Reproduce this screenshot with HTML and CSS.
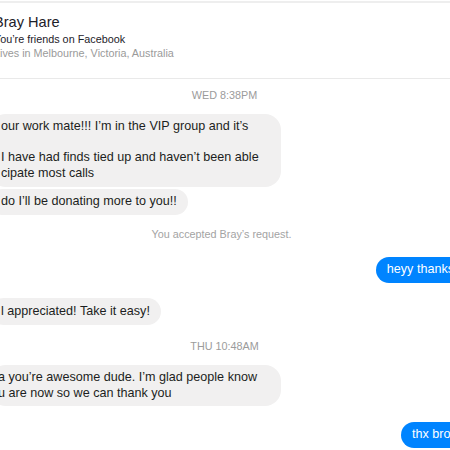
FILE: index.html
```html
<!DOCTYPE html>
<html lang="en">
<head>
<meta charset="utf-8">
<title>Bray Hare</title>
<link rel="stylesheet" href="styles.css">
</head>
<body>
<div class="window">
  <header class="profile">
    <div class="name">Bray Hare</div>
    <div class="friends">You’re friends on Facebook</div>
    <div class="lives">Lives in Melbourne, Victoria, Australia</div>
  </header>
  <main class="thread">
    <div class="stamp">WED 8:38PM</div>
    <div class="group in">
      <div class="bubble wrap">our work mate!!! I’m in the VIP group and it’s<br>&nbsp;<br>I have had finds tied up and haven’t been able<br>cipate most calls</div>
      <div class="bubble">do I’ll be donating more to you!!</div>
    </div>
    <div class="notice">You accepted Bray’s request.</div>
    <div class="group out">
      <div class="bubble">heyy thanks</div>
    </div>
    <div class="group in">
      <div class="bubble">l appreciated! Take it easy!</div>
    </div>
    <div class="stamp">THU 10:48AM</div>
    <div class="group in">
      <div class="bubble wrap"><span class="cut">a you’re awesome dude. I’m glad people know</span><br><span class="cut">u are now so we can thank you</span></div>
    </div>
    <div class="group out">
      <div class="bubble">thx bro!</div>
    </div>
  </main>
</div>
</body>
</html>
```

FILE: styles.css
```css
html, body {
  margin: 0;
  padding: 0;
  background: #ffffff;
  overflow: hidden;
}

body {
  width: 450px;
  height: 450px;
  font-family: "Liberation Sans", Arial, Helvetica, sans-serif;
  color: #1d2129;
}

.window {
  width: 490px;
  margin-left: -20px;
}

.profile {
  margin-top: 1px;
  border-top: 2px solid #eeeeee;
  border-bottom: 1px solid #e9e9e9;
  padding: 11px 0 18px 14px;
}

.name {
  font-size: 14.6px;
  line-height: 17px;
  color: #1d2129;
}

.friends {
  margin-top: 1px;
  font-size: 10.8px;
  line-height: 14px;
  color: #1d2129;
}

.lives {
  font-size: 10.8px;
  line-height: 14px;
  color: #9a9a9a;
}

.thread {
  display: flex;
  flex-direction: column;
  padding: 10px 5px 0 10px;
}

.stamp {
  text-align: center;
  font-size: 10.8px;
  line-height: 13px;
  color: #9b9b9b;
  margin-bottom: 12px;
  padding-right: 6px;
}

.group + .stamp {
  margin-top: 15px;
}

.notice {
  text-align: center;
  font-size: 10.8px;
  line-height: 13px;
  color: #a3a3a3;
  margin-top: 13px;
  padding-right: 12px;
}

.group {
  display: flex;
  flex-direction: column;
  gap: 2px;
}

.group.in {
  align-items: flex-start;
}

.group.out {
  align-items: flex-end;
}

.group + .group,
.notice + .group {
  margin-top: 15.5px;
}

.bubble {
  box-sizing: border-box;
  font-size: 12.6px;
  line-height: 15.5px;
  padding: 5.4px 11px;
  border-radius: 14px;
  white-space: nowrap;
}

.in .bubble {
  background: #f1f0f0;
  color: #1c1e21;
}

.out .bubble {
  background: #0084ff;
  color: #ffffff;
}

.bubble.wrap {
  width: 291px;
  border-radius: 16px;
}

.cut {
  margin-left: -3px;
}
```
